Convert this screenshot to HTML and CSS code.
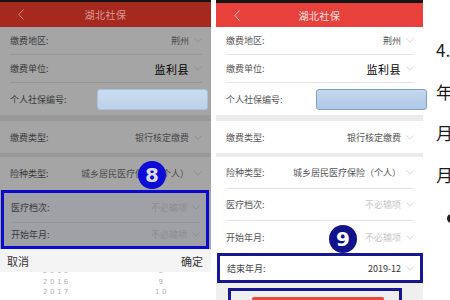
FILE: index.html
```html
<!DOCTYPE html>
<html lang="zh">
<head>
    <meta charset="UTF-8">
    <title>湖北社保</title>
    <link rel="stylesheet" href="styles.css">
</head>
<body>
<div class="page">
    <!-- 左：弹出日期选择时的变暗界面 -->
    <div class="phone dim">
        <div class="head">
            <svg class="back" viewBox="0 0 6 11"><polyline points="5.5,0.5 0.8,5.5 5.5,10.5"/></svg>
            <h3>湖北社保</h3>
        </div>
        <div class="row short"><span class="label">缴费地区:</span><span class="value">荆州</span><svg class="chev" viewBox="0 0 8 5"><polyline points="0.5,0.5 4,4.2 7.5,0.5"/></svg></div>
        <div class="row short"><span class="label">缴费单位:</span><span class="value firm">监利县</span><svg class="chev" viewBox="0 0 8 5"><polyline points="0.5,0.5 4,4.2 7.5,0.5"/></svg></div>
        <div class="row id-row"><span class="label">个人社保编号:</span><span class="redact"></span></div>
        <div class="band"></div>
        <div class="row plain"><span class="label">缴费类型:</span><span class="value">银行核定缴费</span><svg class="chev" viewBox="0 0 8 5"><polyline points="0.5,0.5 4,4.2 7.5,0.5"/></svg></div>
        <div class="band thin"></div>
        <div class="row plain tall"><span class="label">险种类型:</span><span class="value">城乡居民医疗保险（个人）</span><svg class="chev" viewBox="0 0 8 5"><polyline points="0.5,0.5 4,4.2 7.5,0.5"/></svg></div>
        <div class="mark">
            <div class="row split"><span class="label">医疗档次:</span><span class="value hint">不必输项</span><svg class="chev" viewBox="0 0 8 5"><polyline points="0.5,0.5 4,4.2 7.5,0.5"/></svg></div>
            <div class="row low"><span class="label">开始年月:</span><span class="value hint">不必输项</span><svg class="chev" viewBox="0 0 8 5"><polyline points="0.5,0.5 4,4.2 7.5,0.5"/></svg></div>
        </div>
        <div class="picker-bar"><span>取消</span><span>确定</span></div>
        <div class="picker-list">
            <div class="pick"><span>2015</span><span>8</span></div>
            <div class="pick"><span>2016</span><span>9</span></div>
            <div class="pick"><span>2017</span><span>10</span></div>
        </div>
        <span class="badge badge-8">8</span>
    </div>

    <!-- 右：填写完成后的界面 -->
    <div class="phone">
        <div class="head">
            <svg class="back" viewBox="0 0 6 11"><polyline points="5.5,0.5 0.8,5.5 5.5,10.5"/></svg>
            <h3>湖北社保</h3>
        </div>
        <div class="row short"><span class="label">缴费地区:</span><span class="value">荆州</span><svg class="chev" viewBox="0 0 8 5"><polyline points="0.5,0.5 4,4.2 7.5,0.5"/></svg></div>
        <div class="row short"><span class="label">缴费单位:</span><span class="value firm">监利县</span><svg class="chev" viewBox="0 0 8 5"><polyline points="0.5,0.5 4,4.2 7.5,0.5"/></svg></div>
        <div class="row id-row"><span class="label">个人社保编号:</span><span class="redact"></span></div>
        <div class="band"></div>
        <div class="row plain"><span class="label">缴费类型:</span><span class="value">银行核定缴费</span><svg class="chev" viewBox="0 0 8 5"><polyline points="0.5,0.5 4,4.2 7.5,0.5"/></svg></div>
        <div class="band thin"></div>
        <div class="row"><span class="label">险种类型:</span><span class="value">城乡居民医疗保险（个人）</span><svg class="chev" viewBox="0 0 8 5"><polyline points="0.5,0.5 4,4.2 7.5,0.5"/></svg></div>
        <div class="row"><span class="label">医疗档次:</span><span class="value hint">不必输项</span><svg class="chev" viewBox="0 0 8 5"><polyline points="0.5,0.5 4,4.2 7.5,0.5"/></svg></div>
        <div class="row plain"><span class="label">开始年月:</span><span class="value hint">不必输项</span><svg class="chev" viewBox="0 0 8 5"><polyline points="0.5,0.5 4,4.2 7.5,0.5"/></svg></div>
        <div class="mark">
            <div class="row end"><span class="label">结束年月:</span><span class="value date">2019-12</span><svg class="chev" viewBox="0 0 8 5"><polyline points="0.5,0.5 4,4.2 7.5,0.5"/></svg></div>
        </div>
        <div class="foot">
            <div class="submit-mark"><div class="submit"></div></div>
        </div>
        <span class="badge badge-9">9</span>
    </div>

    <div class="note">
        <p>4.</p>
        <p>年</p>
        <p>月</p>
        <p>月</p>
        <p><span class="dot"></span></p>
    </div>
</div>
</body>
</html>
```

FILE: styles.css
```css
* {
    margin: 0;
    padding: 0;
    box-sizing: border-box;
}
html, body {
    width: 450px;
    height: 300px;
    overflow: hidden;
    background: #fff;
    font-family: "Noto Sans CJK SC", "Noto Sans", sans-serif;
}
.page {
    display: flex;
    gap: 5px;
    height: 300px;
}
.phone {
    position: relative;
    flex: none;
    width: 207px;
    background: #fff;
}
.phone.dim {
    width: 211px;
    background: #a5a5a5;
    overflow: hidden;
}

/* 标题栏 */
.head {
    display: grid;
    grid-template-columns: 1fr auto 1fr;
    align-items: center;
    height: 27px;
    border-top: 3px solid #151515;
    background: #e8403a;
    color: #fde6e4;
}
.dim .head {
    border-top-width: 2px;
    background: #a6291f;
    color: #d99b96;
}
.head h3 {
    font-size: 10px;
    font-weight: normal;
    letter-spacing: 0.5px;
}
.back {
    width: 6px;
    height: 11px;
    margin-left: 18px;
    fill: none;
    stroke: #fbd0cc;
    stroke-width: 1;
}
.dim .back {
    stroke: #cf8e88;
}

/* 表单行 */
.row {
    display: flex;
    align-items: center;
    height: 32px;
    margin: 0 9px 0 10px;
    border-bottom: 1px solid #e6e6e6;
    font-size: 9px;
    color: #555;
}
.row.short {
    height: 28px;
}
.row.plain,
.row.id-row {
    border-bottom: 0;
}
.row.low {
    height: 31px;
}
.value {
    margin-left: auto;
    color: #555;
}
.value.hint {
    color: #c6c6c6;
}
.value.firm {
    font-size: 11px;
    font-weight: normal;
    letter-spacing: 0.5px;
    color: #000;
}
.value.date {
    color: #333;
}
.chev {
    width: 8px;
    height: 5px;
    margin-left: 5px;
    fill: none;
    stroke: #cdcdcd;
    stroke-width: 0.8;
}
.redact {
    margin-left: auto;
    margin-right: -13px;
    width: 111px;
    height: 21px;
    border: 1px solid #7fa0c7;
    border-radius: 3px;
    background: linear-gradient(#c4d8ee, #adc7e5);
}
.band {
    height: 6px;
    background: #ebebeb;
}
.band.thin {
    height: 4px;
}

/* 变暗的左图 */
.dim .row {
    border-color: #979797;
    color: #3a3a3a;
}
.dim .row.tall {
    height: 33px;
}
.dim .value {
    color: #4a4a4a;
}
.dim .value.hint {
    color: #8d8d8d;
}
.dim .value.firm {
    color: #000;
}
.dim .chev {
    stroke: #8d8d8d;
}
.dim .redact {
    margin-right: -6px;
    border-color: #a9c1dc;
    background: linear-gradient(#cadcf0, #bcd2ea);
}
.dim .band {
    background: #999;
}

/* 标注框和序号 */
.mark {
    margin-left: 1px;
    border: 3px solid #161690;
}
.dim .mark {
    margin-right: 2px;
    border-color: #0b0bd0;
    background: #a0a0a7;
}
.mark .row {
    margin: 0 6px 0 7px;
}
.mark .row.split {
    height: 30px;
}
.mark .row.low {
    height: 23px;
    border-bottom: 0;
}
.mark .row.end {
    height: 24px;
    border-bottom: 0;
    color: #444;
}
.badge {
    position: absolute;
    width: 28px;
    height: 28px;
    border-radius: 50%;
    background: #12128c;
    color: #fff;
    font: bold 20px/28px "DejaVu Sans", sans-serif;
    text-align: center;
}
.badge-8 {
    left: 138px;
    top: 161px;
    background: #0c0cd6;
    color: #dcdcec;
}
.badge-9 {
    left: 113px;
    top: 225px;
}

/* 日期选择 */
.picker-bar {
    position: relative;
    z-index: 1;
    display: flex;
    justify-content: space-between;
    align-items: center;
    height: 23px;
    padding: 0 8px 0 7px;
    background: #f4f4f4;
    font-size: 11px;
    color: #333;
}
.picker-list {
    height: 40px;
    margin-top: -6px;
    padding-left: 43px;
    background: #fff;
}
.pick {
    display: flex;
    height: 10.5px;
    line-height: 10.5px;
    font-family: "DejaVu Sans", sans-serif;
    font-size: 7px;
    letter-spacing: 2.5px;
    color: #b3b3b3;
}
.pick span:first-child {
    width: 112px;
}
.pick span:last-child {
    width: 14px;
    text-align: center;
}

/* 底部按钮 */
.foot {
    height: 20px;
    padding: 5px 21px 0 12px;
    background: #efefef;
}
.submit-mark {
    height: 15px;
    padding: 6px 15px 0 21px;
    border: 3px solid #161690;
    border-bottom: 0;
}
.submit {
    height: 10px;
    border-radius: 2px 2px 0 0;
    background: #e94a3e;
}

/* 右边的说明文字 */
.note {
    padding: 29px 0 0 8px;
    font-size: 17px;
    line-height: 41.5px;
    color: #1a1a1a;
    white-space: nowrap;
}
.dot {
    display: inline-block;
    width: 8px;
    height: 9px;
    margin-left: 11px;
    border-radius: 50%;
    background: #222;
    vertical-align: middle;
}
```
